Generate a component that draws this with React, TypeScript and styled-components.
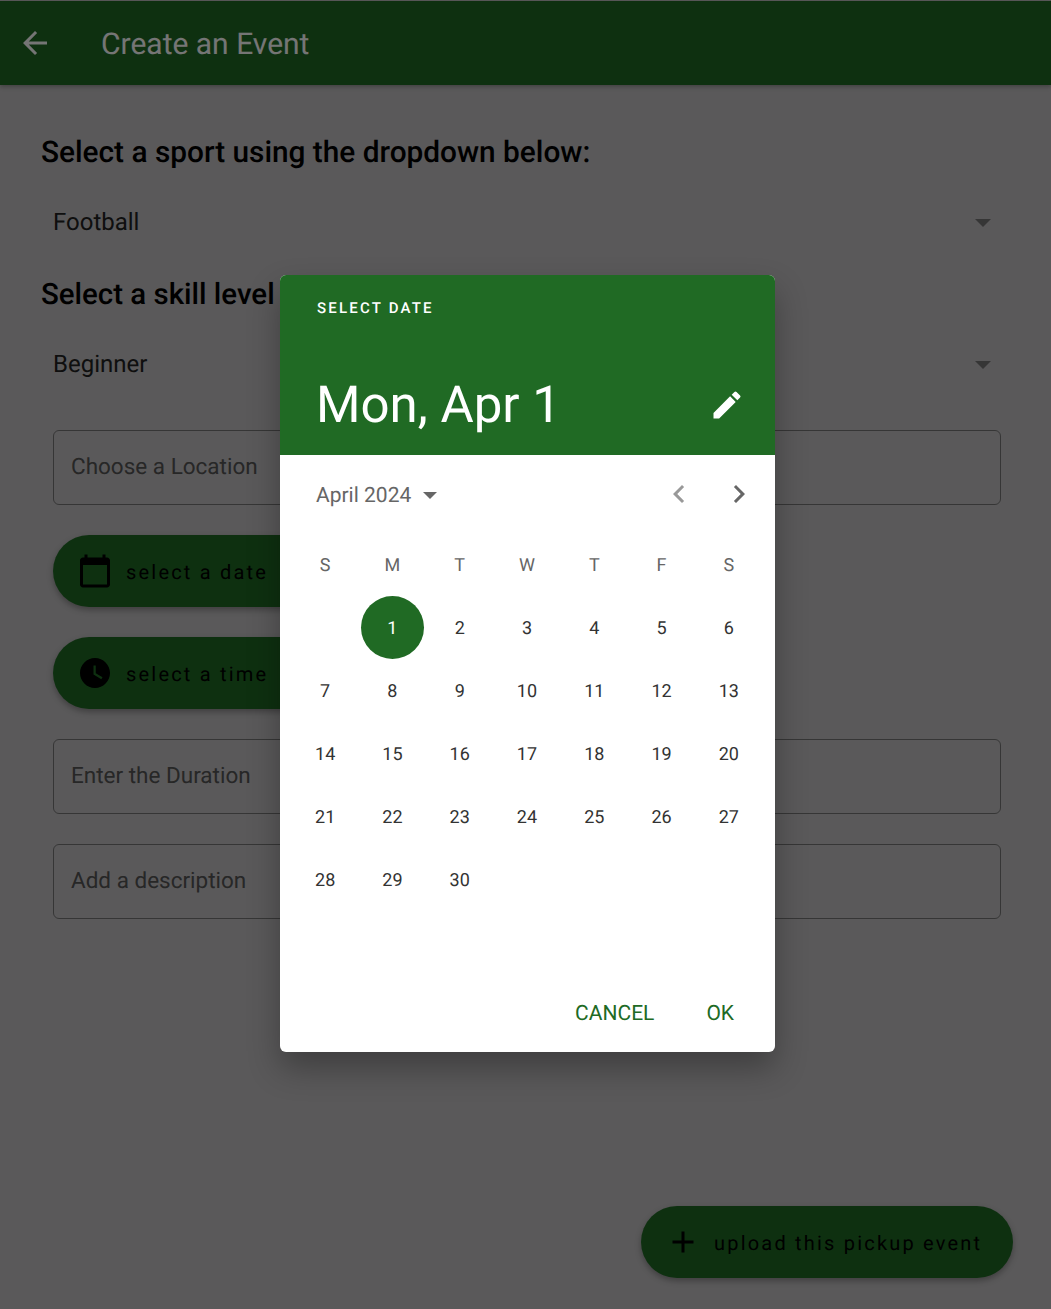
import React from "react";
import styled, { createGlobalStyle } from "styled-components";

const Global = createGlobalStyle`
  html, body { margin: 0; padding: 0; }
  body {
    font-family: Roboto, "Liberation Sans", sans-serif;
    background: #fff;
    text-rendering: geometricPrecision;
  }
`;

const Page = styled.div`
  position: relative;
  width: 1051px;
  height: 1309px;
  box-sizing: border-box;
  padding-top: 1px;
  background: #c4c2c4;
  overflow: hidden;
  display: flex;
  flex-direction: column;
`;
const AppBar = styled.header`
  height: 84px;
  flex: none;
  background: #1f6a24;
  color: #fff;
  display: flex;
  align-items: center;
  padding-left: 17px;
  box-shadow: 0 2px 4px rgba(0, 0, 0, 0.25);
`;
const AppTitle = styled.h1`
  margin: 4px 0 0 48px;
  font-size: 30px;
  font-weight: 400;
  line-height: 1;
`;
const Content = styled.main`
  flex: 1;
  display: flex;
  flex-direction: column;
  padding: 0 50px 0 41px;
`;
const Heading = styled.h2<{ $top: number; $size: number }>`
  margin: ${(p) => p.$top}px 0 0;
  font-size: ${(p) => p.$size}px;
  font-weight: 500;
  line-height: 34px;
  color: #000;
  white-space: nowrap;
`;
const Select = styled.div<{ $top: number }>`
  margin: ${(p) => p.$top}px 0 0 12px;
  height: 48px;
  display: flex;
  align-items: center;
  justify-content: space-between;
  font-size: 24px;
  color: #222;
`;
const Caret = styled.span`
  width: 0;
  height: 0;
  margin: 2px 10px 0 0;
  border-left: 8px solid transparent;
  border-right: 8px solid transparent;
  border-top: 8px solid #777;
`;
const Field = styled.div<{ $top: number }>`
  margin: ${(p) => p.$top}px 0 0 12px;
  height: 75px;
  box-sizing: border-box;
  border: 1.5px solid #777;
  border-radius: 6px;
  padding: 0 0 2px 17px;
  display: flex;
  align-items: center;
  font-size: 22.5px;
  color: #555;
`;
const Pill = styled.div`
  display: inline-flex;
  align-items: center;
  height: 72px;
  border-radius: 36px;
  background: #1f6a24;
  color: #000;
  font-size: 20px;
  letter-spacing: 2.2px;
  box-shadow: 0 3px 6px rgba(0, 0, 0, 0.3);
  box-sizing: border-box;
  white-space: nowrap;
  padding-left: 24px;
  gap: 13px;
`;
const PillLabel = styled.span`
  padding-top: 2px;
`;
const ActionPill = styled(Pill)<{ $top: number }>`
  margin: ${(p) => p.$top}px 0 0 12px;
  width: 300px;
`;
const UploadPill = styled(Pill)`
  position: absolute;
  left: 641px;
  top: 1206px;
  width: 372px;
`;
const Scrim = styled.div`
  position: absolute;
  inset: 0;
  background: rgba(0, 0, 0, 0.54);
`;
const Dialog = styled.section`
  position: absolute;
  left: 279.5px;
  top: 275px;
  width: 495px;
  height: 777px;
  background: #fff;
  border-radius: 6px;
  overflow: hidden;
  box-shadow: 0 16px 32px rgba(0, 0, 0, 0.3);
  display: flex;
  flex-direction: column;
`;
const DialogHeader = styled.div`
  height: 180px;
  flex: none;
  box-sizing: border-box;
  padding: 24px 30px 0 36.5px;
  background: #206a24;
  color: #fff;
`;
const Overline = styled.div`
  padding-left: 1px;
  font-size: 15px;
  line-height: 18px;
  font-weight: 500;
  letter-spacing: 2.2px;
`;
const HeaderRow = styled.div`
  margin-top: 56px;
  display: flex;
  align-items: center;
  justify-content: space-between;
`;
const BigDate = styled.div`
  padding-top: 3px;
  font-size: 51px;
  line-height: 60px;
  font-weight: 400;
`;
const MonthBar = styled.div`
  height: 78px;
  flex: none;
  box-sizing: border-box;
  display: flex;
  align-items: center;
  padding: 0 18px 0 36.5px;
  color: #666;
  font-size: 21px;
`;
const MonthLabel = styled.span`
  flex: 1;
  padding-top: 3px;
  display: flex;
  align-items: center;
  gap: 12px;
`;
const NavGroup = styled.span`
  display: flex;
  gap: 24px;
`;
const SmallCaret = styled.span`
  width: 0;
  height: 0;
  border-left: 7.5px solid transparent;
  border-right: 7.5px solid transparent;
  border-top: 7.5px solid #666;
`;
const CalGrid = styled.div`
  padding: 0 12px;
  display: grid;
  grid-template-columns: repeat(7, 1fr);
  grid-auto-rows: 63px;
`;
const Weekday = styled.div`
  padding-top: 2px;
  box-sizing: border-box;
  display: flex;
  align-items: center;
  justify-content: center;
  font-size: 18px;
  color: #666;
`;
const Day = styled.div<{ $selected?: boolean }>`
  justify-self: center;
  width: 63px;
  height: 63px;
  box-sizing: border-box;
  padding-top: 1px;
  border-radius: 50%;
  display: flex;
  align-items: center;
  justify-content: center;
  font-size: 18px;
  color: ${(p) => (p.$selected ? "#fff" : "#333")};
  background: ${(p) => (p.$selected ? "#206a24" : "transparent")};
`;
const Actions = styled.div`
  margin-top: auto;
  height: 78px;
  flex: none;
  box-sizing: border-box;
  padding: 1px 40.5px 0 0;
  display: flex;
  justify-content: flex-end;
  align-items: center;
  gap: 52px;
`;
const TextButton = styled.span`
  color: #206a24;
  font-size: 21px;
  font-weight: 400;
`;

const days = Array.from({ length: 30 }, (_, i) => i + 1);

const CalendarIcon = () => (
  <svg width="36" height="36" viewBox="0 0 24 24" fill="#000">
    <path d="M20 3h-1V1h-2v2H7V1H5v2H4c-1.1 0-2 .9-2 2v16c0 1.1.9 2 2 2h16c1.1 0 2-.9 2-2V5c0-1.1-.9-2-2-2zm0 18H4V8h16v13z" />
  </svg>
);
const ClockIcon = () => (
  <svg width="36" height="36" viewBox="0 0 24 24" fill="#000">
    <path d="M12 2C6.5 2 2 6.5 2 12s4.5 10 10 10 10-4.5 10-10S17.5 2 12 2zm4.2 14.2L11 13V7h1.5v5.2l4.5 2.7-.8 1.3z" />
  </svg>
);
const PlusIcon = () => (
  <svg width="36" height="36" viewBox="0 0 24 24" fill="#000">
    <path d="M19 13h-6v6h-2v-6H5v-2h6V5h2v6h6v2z" />
  </svg>
);
const BackIcon = () => (
  <svg width="36" height="36" viewBox="0 0 24 24" fill="#fff">
    <path d="M20 11H7.83l5.59-5.59L12 4l-8 8 8 8 1.41-1.41L7.83 13H20v-2z" />
  </svg>
);
const PencilIcon = () => (
  <svg width="36" height="36" viewBox="0 0 24 24" fill="#fff">
    <path d="M3 17.25V21h3.75L17.81 9.94l-3.75-3.75L3 17.25zM20.71 7.04a1 1 0 0 0 0-1.41l-2.34-2.34a1 1 0 0 0-1.41 0l-1.83 1.83 3.75 3.75 1.83-1.83z" />
  </svg>
);
const Chevron = ({ dir, color }: { dir: "left" | "right"; color: string }) => (
  <svg width="36" height="36" viewBox="0 0 24 24" fill={color}>
    <path d={dir === "left" ? "M15.41 7.41 14 6l-6 6 6 6 1.41-1.41L10.83 12z" : "M10 6 8.59 7.41 13.17 12l-4.58 4.59L10 18l6-6z"} />
  </svg>
);

export default function App() {
  return (
    <Page>
      <Global />
      <AppBar>
        <BackIcon />
        <AppTitle>Create an Event</AppTitle>
      </AppBar>
      <Content>
        <Heading $top={51} $size={29.8}>Select a sport using the dropdown below:</Heading>
        <Select $top={28}>
          Football
          <Caret />
        </Select>
        <Heading $top={32} $size={29.45}>Select a skill level</Heading>
        <Select $top={28}>
          Beginner
          <Caret />
        </Select>
        <Field $top={42}>Choose a Location</Field>
        <ActionPill $top={30}>
          <CalendarIcon />
          <PillLabel>select a date</PillLabel>
        </ActionPill>
        <ActionPill $top={30}>
          <ClockIcon />
          <PillLabel>select a time</PillLabel>
        </ActionPill>
        <Field $top={30}>Enter the Duration</Field>
        <Field $top={30}>Add a description</Field>
      </Content>
      <UploadPill>
        <PlusIcon />
        <PillLabel>upload this pickup event</PillLabel>
      </UploadPill>
      <Scrim />
      <Dialog>
        <DialogHeader>
          <Overline>SELECT DATE</Overline>
          <HeaderRow>
            <BigDate>Mon, Apr 1</BigDate>
            <PencilIcon />
          </HeaderRow>
        </DialogHeader>
        <MonthBar>
          <MonthLabel>
            April 2024
            <SmallCaret />
          </MonthLabel>
          <NavGroup>
            <Chevron dir="left" color="#999" />
            <Chevron dir="right" color="#666" />
          </NavGroup>
        </MonthBar>
        <CalGrid>
          {["S", "M", "T", "W", "T", "F", "S"].map((d, i) => (
            <Weekday key={i}>{d}</Weekday>
          ))}
          <span />
          {days.map((d) => (
            <Day key={d} $selected={d === 1}>
              {d}
            </Day>
          ))}
        </CalGrid>
        <Actions>
          <TextButton>CANCEL</TextButton>
          <TextButton>OK</TextButton>
        </Actions>
      </Dialog>
    </Page>
  );
}
